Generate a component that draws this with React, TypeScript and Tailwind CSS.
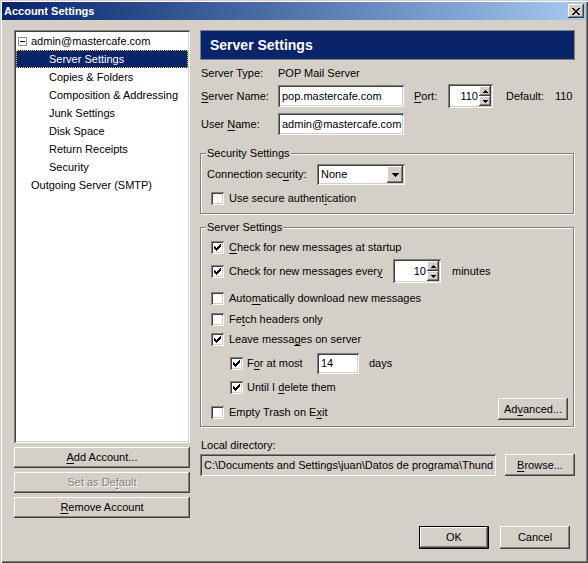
import React from "react";

const raised =
  "bg-[#d4d0c8] shadow-[inset_-1px_-1px_0_#404040,inset_1px_1px_0_#ffffff,inset_-2px_-2px_0_#808080,inset_2px_2px_0_#d4d0c8]";
const sunken =
  "shadow-[inset_1px_1px_0_#808080,inset_-1px_-1px_0_#ffffff,inset_2px_2px_0_#404040,inset_-2px_-2px_0_#d4d0c8]";

function U({ children }: { children: React.ReactNode }) {
  return <span className="underline underline-offset-[2px]">{children}</span>;
}

function Check({ checked }: { checked?: boolean }) {
  return (
    <span className={`flex w-[13px] h-[13px] shrink-0 bg-white ${sunken}`}>
      {checked && (
        <svg width="13" height="13" viewBox="0 0 13 13" shapeRendering="crispEdges">
          <path
            fill="#000"
            d="M9 3h1v1H9z M8 4h2v1H8z M3 5h1v1H3z M7 5h3v1H7z M3 6h2v1H3z M6 6h3v1H6z M3 7h5v1H3z M4 8h3v1H4z M5 9h1v1H5z"
          />
        </svg>
      )}
    </span>
  );
}

function Arrow({ up }: { up?: boolean }) {
  return (
    <svg width="5" height="3" viewBox="0 0 5 3" shapeRendering="crispEdges">
      <path fill="#000" d={up ? "M2 0h1v1H2z M1 1h3v1H1z M0 2h5v1H0z" : "M0 0h5v1H0z M1 1h3v1H1z M2 2h1v1H2z"} />
    </svg>
  );
}

function Spinner({ value, className }: { value: string; className: string }) {
  return (
    <div className={`flex bg-white p-[2px] ${sunken} ${className}`}>
      <div className="flex-1 flex items-center justify-end pr-[1px]">{value}</div>
      <div className="flex flex-col w-[12px]">
        <div className={`flex-1 flex items-center justify-center ${raised}`}>
          <Arrow up />
        </div>
        <div className={`flex-1 flex items-center justify-center ${raised}`}>
          <Arrow />
        </div>
      </div>
    </div>
  );
}

function Field({ children, className }: { children: React.ReactNode; className: string }) {
  return (
    <div className={`flex items-center px-[4px] whitespace-nowrap overflow-hidden ${sunken} ${className}`}>
      {children}
    </div>
  );
}

function Button({
  children,
  className,
  isDefault,
}: {
  children: React.ReactNode;
  className: string;
  isDefault?: boolean;
}) {
  if (isDefault) {
    return (
      <div className={`flex border border-black ${className}`}>
        <div className={`flex-1 flex items-center justify-center ${raised}`}>{children}</div>
      </div>
    );
  }
  return <div className={`flex items-center justify-center ${raised} ${className}`}>{children}</div>;
}

function Group({ title, className, children }: { title: string; className: string; children: React.ReactNode }) {
  return (
    <div
      className={`relative w-[374px] border border-[#808080] shadow-[inset_1px_1px_0_#ffffff,1px_1px_0_#ffffff] ${className}`}
    >
      <span className="absolute left-[5px] -top-[8px] px-[1px] bg-[#d4d0c8] leading-[14px]">{title}</span>
      {children}
    </div>
  );
}

const treeItems = [
  "Server Settings",
  "Copies & Folders",
  "Composition & Addressing",
  "Junk Settings",
  "Disk Space",
  "Return Receipts",
  "Security",
];

export default function App() {
  return (
    <div className="w-[588px] h-[563px] bg-[#d4d0c8] p-[2px] flex flex-col text-[11px] leading-[13px] text-black font-['Liberation_Sans',Arial,sans-serif] shadow-[inset_1px_1px_0_#d4d0c8,inset_2px_2px_0_#ffffff,inset_-1px_-1px_0_#404040,inset_-2px_-2px_0_#808080]">
      {/* title bar */}
      <div className="h-[18px] flex items-center justify-between bg-linear-to-r from-[#0a246a] to-[#a6caf0] pl-[2px] pr-[2px]">
        <span className="text-white font-bold">Account Settings</span>
        <div className={`w-[16px] h-[14px] flex items-center justify-center ${raised}`}>
          <svg width="8" height="7" viewBox="0 0 8 7" shapeRendering="crispEdges">
            <path
              fill="#000"
              d="M0 0h2v1H0z M6 0h2v1H6z M1 1h2v1H1z M5 1h2v1H5z M2 2h4v1H2z M3 3h2v1H3z M2 4h4v1H2z M1 5h2v1H1z M5 5h2v1H5z M0 6h2v1H0z M6 6h2v1H6z"
            />
          </svg>
        </div>
      </div>

      <div className="flex-1 flex pl-[12px] pt-[10px]">
        {/* left column */}
        <div className="w-[176px] flex flex-col">
          <div className={`h-[413px] bg-white p-[2px] ${sunken}`}>
            <div className="h-[18px] flex items-center pl-[2px]">
              <span className="w-[9px] h-[9px] border border-[#8c8cb4] bg-white flex items-center justify-center">
                <span className="w-[5px] h-px bg-black" />
              </span>
              <span className="ml-[4px]">admin@mastercafe.com</span>
            </div>
            {treeItems.map((item, i) =>
              i === 0 ? (
                <div
                  key={item}
                  className="h-[18px] flex items-center pl-[32px] bg-[#0a246a] text-white border border-dotted border-[#e6c84c]"
                >
                  {item}
                </div>
              ) : (
                <div key={item} className="h-[18px] flex items-center pl-[33px]">
                  {item}
                </div>
              )
            )}
            <div className="h-[18px] flex items-center pl-[15px]">Outgoing Server (SMTP)</div>
          </div>
          <Button className="h-[21px] mt-[4px]">
            <span>
              <U>A</U>dd Account...
            </span>
          </Button>
          <Button className="h-[21px] mt-[4px]">
            <span className="text-[#808080] [text-shadow:1px_1px_0_#ffffff]">
              Set as De<U>f</U>ault
            </span>
          </Button>
          <Button className="h-[21px] mt-[4px]">
            <span>
              <U>R</U>emove Account
            </span>
          </Button>
        </div>

        {/* right column */}
        <div className="w-[375px] ml-[10px] flex flex-col">
          <div className="h-[30px] flex items-center bg-[#0a246a] border border-[#808080] pl-[9px]">
            <span className="text-white font-bold text-[14px] leading-[16px]">Server Settings</span>
          </div>

          <div className="mt-[5px] h-[16px] flex items-center pl-[1px]">
            <span className="w-[77px]">Server Type:</span>
            <span>POP Mail Server</span>
          </div>

          <div className="mt-[4px] h-[22px] flex items-center pl-[1px]">
            <span className="w-[77px]">
              <U>S</U>erver Name:
            </span>
            <Field className="w-[126px] h-[22px] bg-white">pop.mastercafe.com</Field>
            <span className="ml-[10px] w-[34px]">
              <U>P</U>ort:
            </span>
            <Spinner value="110" className="w-[45px] h-[24px]" />
            <span className="ml-[13px]">Default:</span>
            <span className="ml-[11px]">110</span>
          </div>

          <div className="mt-[6px] h-[22px] flex items-center pl-[1px]">
            <span className="w-[77px]">
              User <U>N</U>ame:
            </span>
            <Field className="w-[126px] h-[22px] bg-white">admin@mastercafe.com</Field>
          </div>

          <Group title="Security Settings" className="mt-[18px] h-[61px] pt-[10px]">
            <div className="h-[21px] flex items-center pl-[6px]">
              <span className="w-[110px]">
                Connection sec<U>u</U>rity:
              </span>
              <div className={`w-[88px] h-[21px] flex bg-white p-[2px] ${sunken}`}>
                <span className="flex-1 flex items-center pl-[2px]">None</span>
                <span className={`w-[16px] flex items-center justify-center ${raised}`}>
                  <svg width="7" height="4" viewBox="0 0 7 4" shapeRendering="crispEdges">
                    <path fill="#000" d="M0 0h7v1H0z M1 1h5v1H1z M2 2h3v1H2z M3 3h1v1H3z" />
                  </svg>
                </span>
              </div>
            </div>
            <div className="mt-[7px] h-[13px] flex items-center gap-[5px] pl-[10px]">
              <Check />
              <span>
                Use secure authent<U>i</U>cation
              </span>
            </div>
          </Group>

          <Group title="Server Settings" className="mt-[13px] h-[200px] pt-[13px] pl-[10px]">
            <div className="h-[13px] flex items-center gap-[5px]">
              <Check checked />
              <span>
                <U>C</U>heck for new messages at startup
              </span>
            </div>
            <div className="mt-[5px] h-[24px] flex items-center">
              <Check checked />
              <span className="ml-[5px] w-[164px]">
                Check for new messages ever<U>y</U>
              </span>
              <Spinner value="10" className="w-[48px] h-[24px]" />
              <span className="ml-[11px]">minutes</span>
            </div>
            <div className="mt-[9px] h-[13px] flex items-center gap-[5px]">
              <Check />
              <span>
                Auto<U>m</U>atically download new messages
              </span>
            </div>
            <div className="mt-[8px] h-[13px] flex items-center gap-[5px]">
              <Check />
              <span>
                Fe<U>t</U>ch headers only
              </span>
            </div>
            <div className="mt-[7px] h-[13px] flex items-center gap-[5px]">
              <Check checked />
              <span>
                Leave messa<U>g</U>es on server
              </span>
            </div>
            <div className="mt-[7px] h-[21px] flex items-center pl-[19px]">
              <Check checked />
              <span className="ml-[4px] w-[70px]">
                F<U>o</U>r at most
              </span>
              <Field className="w-[42px] h-[21px] bg-white">14</Field>
              <span className="ml-[10px]">days</span>
            </div>
            <div className="mt-[7px] h-[13px] flex items-center gap-[4px] pl-[19px]">
              <Check checked />
              <span>
                Until I <U>d</U>elete them
              </span>
            </div>
            <div className="mt-[4px] h-[22px] flex items-start">
              <div className="mt-[8px] flex items-center gap-[5px]">
                <Check />
                <span>
                  Empty Trash on E<U>x</U>it
                </span>
              </div>
              <Button className="ml-auto mr-[5px] w-[70px] h-[22px]">
                <span>
                  Ad<U>v</U>anced...
                </span>
              </Button>
            </div>
          </Group>

          <div className="mt-[11px] h-[14px] flex items-center pl-[1px]">Local directory:</div>
          <div className="mt-[2px] h-[22px] flex">
            <Field className="w-[296px] h-[22px] bg-[#d4d0c8]">
              C:\Documents and Settings\juan\Datos de programa\Thund
            </Field>
            <Button className="ml-[9px] w-[70px] h-[22px]">
              <span>
                <U>B</U>rowse...
              </span>
            </Button>
          </div>

          <div className="mt-[50px] flex justify-end gap-[11px] pr-[5px]">
            <Button isDefault className="w-[70px] h-[23px]">
              OK
            </Button>
            <Button className="w-[70px] h-[23px]">Cancel</Button>
          </div>
        </div>
      </div>
    </div>
  );
}
